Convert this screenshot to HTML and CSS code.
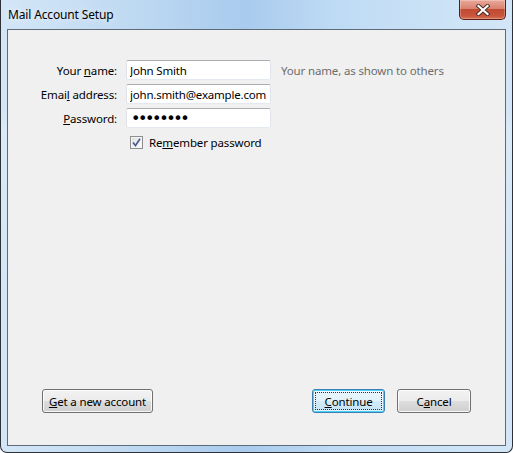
FILE: index.html
```html
<!DOCTYPE html>
<html>
    <head>
        <meta name="viewport" content="width=device-width, initial-scale=1.0">
        <link rel="stylesheet" href="styles.css">
    </head>
    <body>
        <div class="window">
            <div class="titlebar">
                <span class="title">Mail Account Setup</span>
                <button class="close" title="Close">
                    <svg width="16" height="12" viewBox="0 0 16 12">
                        <path d="M3.5 2 L12.5 10 M12.5 2 L3.5 10" stroke="#4a2a24" stroke-width="4" stroke-linecap="square"/>
                        <path d="M3.5 2 L12.5 10 M12.5 2 L3.5 10" stroke="#ffffff" stroke-width="2.2" stroke-linecap="square"/>
                    </svg>
                </button>
            </div>

            <div class="client">
                <div class="form">
                    <label class="lbl" for="name">Your <u>n</u>ame:</label>
                    <input class="field" type="text" id="name" value="John Smith">
                    <span class="hint">Your name, as shown to others</span>

                    <label class="lbl" for="email">Emai<u>l</u> address:</label>
                    <input class="field" type="text" id="email" value="john.smith@example.com">
                    <span></span>

                    <label class="lbl" for="pass"><u>P</u>assword:</label>
                    <input class="field pass" type="password" id="pass" value="12345678">
                    <span></span>

                    <span></span>
                    <label class="remember">
                        <span class="check">
                            <svg width="9" height="9" viewBox="0 0 9 9">
                                <path d="M1 4.5 L3.5 7.5 L8 0.8" fill="none" stroke="#4b5f95" stroke-width="1.7"/>
                            </svg>
                        </span>
                        Re<u>m</u>ember password
                    </label>
                </div>

                <div class="actions">
                    <button class="btn wide"><u>G</u>et a new account</button>
                    <div class="right">
                        <button class="btn default"><span class="focus"><u>C</u>ontinue</span></button>
                        <button class="btn">C<u>a</u>ncel</button>
                    </div>
                </div>
            </div>
        </div>
    </body>
</html>
```

FILE: styles.css
```css
* {
    margin: 0;
    padding: 0;
    box-sizing: border-box;
}
body {
    margin: 0;
    overflow: hidden;
    font-family: "Noto Sans", "Open Sans", sans-serif;
    font-size: 11.5px;
    letter-spacing: -0.15px;
    color: #000;
    background: #fff;
}
.window {
    width: 513px;
    height: 453px;
    display: flex;
    flex-direction: column;
    border: 1px solid #2e3238;
    border-top: none;
    border-radius: 0 0 7px 7px;
    background:
        linear-gradient(180deg, rgba(255,255,255,0) 0px, rgba(255,255,255,0) 110px, rgba(255,255,255,0.15) 130px, rgba(255,255,255,0) 300px),
        linear-gradient(90deg, #d3e6f7 0%, #c2dbf2 22%, #a9cbee 48%, #bedaf4 65%, #cbe2f6 85%, #d3e6f7 100%);
}
.titlebar {
    height: 29px;
    display: flex;
    justify-content: space-between;
    align-items: flex-start;
    padding-left: 7px;
    padding-right: 6px;
}
.title {
    margin-top: 6px;
    font-size: 12px;
    color: #000;
    text-shadow: 0 0 6px rgba(255,255,255,0.9);
}
.close {
    width: 47px;
    height: 20px;
    display: flex;
    align-items: center;
    justify-content: center;
    border: 1px solid #5a1e16;
    border-top: none;
    border-radius: 0 0 5px 5px;
    background: linear-gradient(180deg, #e9a99a 0%, #d9826f 45%, #c14b33 50%, #c7533a 80%, #d46f52 100%);
    box-shadow: inset 0 0 0 1px rgba(255,255,255,0.25);
}
.client {
    flex: 1;
    margin: 0 6px 6px 6px;
    border: 1px solid #5d6a78;
    background: #f0f0f0;
    display: flex;
    flex-direction: column;
}
.form {
    display: grid;
    grid-template-columns: 109px 145px 1fr;
    grid-auto-rows: 20px;
    column-gap: 9px;
    row-gap: 4px;
    padding-top: 30px;
    align-items: center;
}
.lbl {
    text-align: right;
    white-space: nowrap;
}
.field {
    height: 20px;
    width: 145px;
    padding: 0 2px 0 3px;
    font-family: inherit;
    font-size: 11.5px;
    letter-spacing: -0.2px;
    color: #000;
    background: #fff;
    border: 1px solid #e2e3ea;
    border-top-color: #abadb3;
    border-bottom-color: #e3e9ef;
    border-radius: 2px;
    outline: 0;
}
.pass {
    font-family: "DejaVu Sans", sans-serif;
    font-size: 16px;
    letter-spacing: -2.4px;
    padding-left: 4px;
}
.hint {
    padding-left: 1px;
    color: #6d6d6d;
    white-space: nowrap;
}
.remember {
    display: flex;
    align-items: center;
    padding-left: 4px;
    white-space: nowrap;
}
.check {
    width: 13px;
    height: 13px;
    margin-right: 6px;
    display: flex;
    align-items: center;
    justify-content: center;
    border: 1px solid #8e8f8f;
    background: linear-gradient(135deg, #dcdcdc 0%, #f2f2f2 60%, #ffffff 100%);
    box-shadow: inset 0 0 0 1px #f4f4f4;
}
.actions {
    margin-top: auto;
    display: flex;
    justify-content: space-between;
    align-items: center;
    padding: 0 34px 32px 34px;
}
.right {
    display: flex;
    gap: 12px;
}
.btn {
    height: 24px;
    width: 74px;
    font-family: inherit;
    font-size: 11.5px;
    letter-spacing: -0.15px;
    color: #000;
    border: 1px solid #707070;
    border-radius: 3px;
    background: linear-gradient(180deg, #f2f2f2 0%, #ebebeb 50%, #dddddd 51%, #cfcfcf 100%);
    box-shadow: inset 0 0 0 1px rgba(255,255,255,0.8);
    display: flex;
    align-items: center;
    justify-content: center;
    white-space: nowrap;
}
.wide {
    width: 111px;
}
.default {
    width: 73px;
    border-color: #3c7fb1;
    box-shadow: inset 0 0 0 1px #48d1f9, inset 0 0 0 2px rgba(255,255,255,0.5);
    background: linear-gradient(180deg, #eaf6fd 0%, #e3f1fa 50%, #d4ebf7 51%, #c4e2f3 100%);
}
.focus {
    width: 67px;
    height: 18px;
    display: flex;
    align-items: center;
    justify-content: center;
    border: 1px dotted #333;
}
```
